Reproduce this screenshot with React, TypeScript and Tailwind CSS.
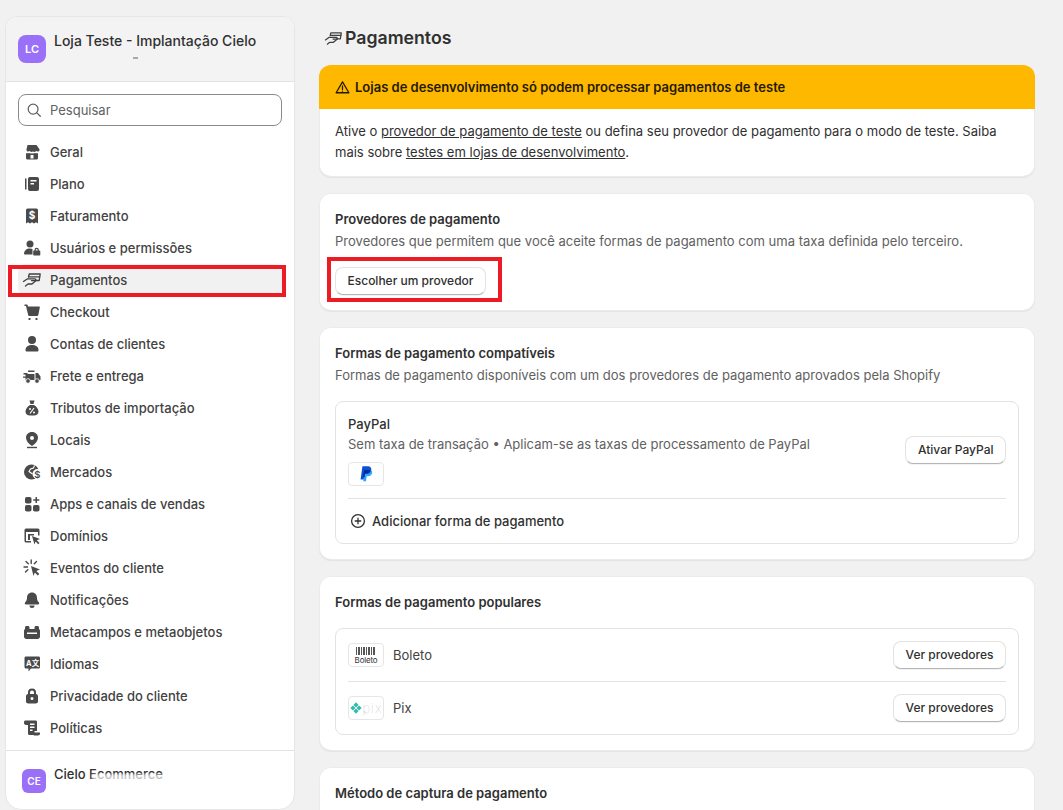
import React from "react";

const I = ({ children }: { children: React.ReactNode }) => (
  <svg viewBox="0 0 20 20" className="w-5 h-5 shrink-0" fill="#4a4a4a">{children}</svg>
);

const PayIcon = ({ className = "w-5 h-5" }: { className?: string }) => (
  <svg viewBox="0 0 20 20" className={`${className} shrink-0`} fill="none" stroke="#3f3f3f" strokeWidth="1.300" strokeLinejoin="round" strokeLinecap="round">
    <path d="M6.500 7 7.200 4h11l-1 6.500h-3" />
    <path d="M7 6.800h10.700" />
    <path d="M1.500 11.500 5.500 8.800h7.500c1.100 0 1.100 1.800 0 1.800H9.500" />
    <path d="M14 10.500 10 14H6L3.500 16" />
  </svg>
);

const icons: Record<string, React.ReactNode> = {
  Geral: <I><path d="M5.500 3h9l3 4.200c.4 1.800-1.600 3-3 1.900-1 1-2.600 1-3.500.3-1 .7-2.500.7-3.500-.3-1.400 1.100-3.400-.1-3-1.900z" /><path fillRule="evenodd" d="M4 11.200c1 .3 2 .2 3-.2 1 .5 2 .5 3 .2 1 .3 2 .3 3-.2 1 .4 2 .5 3 .2V16a1.500 1.500 0 0 1-1.500 1.500h-9A1.500 1.500 0 0 1 4 16zM8.500 13v3.500h3V13z" /></I>,
  Plano: <I><path d="M3 4.500h1.500v11H3z" /><path fillRule="evenodd" d="M7.500 3H15a2 2 0 0 1 2 2v10a2 2 0 0 1-2 2H7.500a2 2 0 0 1-1.500-2V5a2 2 0 0 1 1.500-2zM8.500 6v1.500h6V6zm0 3v1.500h3.500V9z" /></I>,
  Faturamento: <I><path fillRule="evenodd" d="M5.500 2.500h9A1.500 1.500 0 0 1 16 4v13.500l-2-1.300-2 1.300-2-1.300-2 1.300-2-1.300-2 1.300V4a1.500 1.500 0 0 1 1.500-1.500z" /><text x="10" y="12.500" fontSize="10" fontWeight="700" textAnchor="middle" fill="#fff" fontFamily="Inter, sans-serif">$</text></I>,
  "Usuários e permissões": <I><circle cx="8" cy="6" r="3.500" /><path d="M2 16c0-3.500 2.500-5.500 6-5.500 1 0 1.800.2 2.500.5v5.500H3c-.6 0-1-.4-1-.5z" /><path fillRule="evenodd" d="M12 12.500h.5V12a2.200 2.200 0 0 1 4.400 0v.5h.6c.5 0 .8.400.8.800v3.400c0 .500-.300.800-.800.800H12c-.500 0-.800-.300-.800-.800v-3.400c0-.400.300-.800.800-.800zm1.800-.5v.5h1.800V12a.900.900 0 0 0-1.800 0z" /></I>,
  Checkout: <I><path d="M2.500 2.500h2.200c.5 0 .9.300 1 .8l.3 1.200h11c.6 0 1 .500.800 1.100l-1.500 7.500c-.1.500-.500.900-1 .900H7.200c-.5 0-.9-.300-1-.800L4 4H2.500z" /><rect x="6.500" y="16" width="2" height="2" rx=".6" /><rect x="13.500" y="16" width="2" height="2" rx=".6" /></I>,
  "Contas de clientes": <I><circle cx="10" cy="6" r="4" /><path d="M3.500 16c0-3.200 2.900-5 6.500-5s6.500 1.800 6.500 5c0 1-.6 1.500-1.500 1.500H5c-.9 0-1.500-.500-1.500-1.500z" /></I>,
  "Frete e entrega": <I><path d="M6 4.500h6.500V6H6zM3.500 8h9v6h-9zM13.500 7H16l2.500 3.500V14h-5z" /><path d="M1.500 7h4v1.400h-4zM1 10.500h5v1.300H1z" /><circle cx="6" cy="15" r="2.300" stroke="#fff" strokeWidth=".8" /><circle cx="15" cy="15" r="2.300" stroke="#fff" strokeWidth=".8" /></I>,
  "Tributos de importação": <I><path fillRule="evenodd" d="M7.500 2.500h5l-1 3.500H8.500zM8 7h4c2.500 1.500 4.500 4 4.500 6.500 0 2.500-2 4-4.500 4H8c-2.500 0-4.500-1.500-4.500-4C3.500 11 5.500 8.500 8 7z" /><path d="m12 10-4 5.500" stroke="#fff" strokeWidth="1.200" /><circle cx="8" cy="11" r="1" fill="#fff" /><circle cx="12" cy="14.500" r="1" fill="#fff" /></I>,
  Locais: <I><path fillRule="evenodd" d="M10 2c3.600 0 6 2.600 6 5.800 0 3-2.600 6-6 8.200-3.400-2.200-6-5.200-6-8.200C4 4.600 6.400 2 10 2zm0 4a2 2 0 1 0 0 4 2 2 0 0 0 0-4z" /><path d="M5 16.800h10v1.400H5z" /></I>,
  Mercados: <I><circle cx="9.500" cy="10" r="7.500" /><path d="M12.500 3.500 11.500 6l-3 1-1.500 2.500 3.500 2.500" stroke="#fff" strokeWidth="1.100" fill="none" /><circle cx="15.500" cy="12" r="5" fill="#fff" /><text x="15.400" y="15.500" fontSize="9.500" fontWeight="600" textAnchor="middle" fontFamily="Inter, sans-serif">$</text></I>,
  "Apps e canais de vendas": <I><rect x="3" y="3" width="6.500" height="6.500" rx="1.800" /><rect x="3" y="11" width="6.500" height="6.500" rx="1.800" /><rect x="11" y="11" width="6.500" height="6.500" rx="1.800" /><path d="M13.500 3h1.500v2.300h2.300v1.500H15v2.300h-1.500V6.800h-2.300V5.300h2.300z" /></I>,
  Domínios: <I><path fillRule="evenodd" d="M4 2.500h12A1.500 1.500 0 0 1 17.500 4v5.500H16V6H4v9h5v1.500H4A1.500 1.500 0 0 1 2.500 15V4A1.500 1.500 0 0 1 4 2.500z" /><path d="M6 8h6v1.500H8V14H6z" /><path d="m10 10 8 3-3.200 1.200L17.500 17l-1.300 1.200-2.600-2.700L12.500 18.500z" /></I>,
  "Eventos do cliente": <I><path d="m9 8 9 3.500-3.700 1.500 3 3-1.500 1.500-3-3L11.500 18z" /><path d="M9.200 2v3.500M4 3.500l2.300 2.300M2 9h3.500M3.500 14l2.300-2.300M14.500 3.500 12.300 5.800" stroke="#4a4a4a" strokeWidth="1.400" strokeLinecap="round" fill="none" /></I>,
  Notificações: <I><path d="M10 2.500c3.200 0 5 2.500 5 5.200 0 2.300.8 3.500 1.800 4.500.8.800.4 2.300-.8 2.300H4c-1.200 0-1.600-1.500-.8-2.300C4.200 11.200 5 10 5 7.700 5 5 6.800 2.500 10 2.500z" /><path d="M7.500 15.500h5a2.500 2.500 0 0 1-5 0z" /></I>,
  "Metacampos e metaobjetos": <I><path fillRule="evenodd" d="M4.500 4h1.500c.8 0 1.500.700 1.500 1.500V7h5V5.500c0-.800.700-1.500 1.500-1.500h1.500C16.400 4 17 4.600 17 5.500V7c.6.500 1 1 1 2v5.500c0 1.400-1 2.500-2.500 2.500h-11C3 17 2 15.900 2 14.500V9c0-1 .4-1.500 1-2V5.500C3 4.600 3.600 4 4.500 4zM5 10.500V12h10v-1.500z" /></I>,
  Idiomas: <I><path d="M4 2.500h12.500c1 0 1.500.700 1.500 1.500v9c0 1-.7 1.500-1.500 1.500H9L6.500 17.500v-3H4c-1 0-1.500-.700-1.500-1.500V4c0-1 .7-1.500 1.500-1.500z" /><text x="6.800" y="11.500" fontSize="7.500" fontWeight="700" textAnchor="middle" fill="#fff" fontFamily="Inter, sans-serif">A</text><text x="13.500" y="11.500" fontSize="7.500" fontWeight="700" textAnchor="middle" fill="#fff" fontFamily="Noto Sans CJK SC, sans-serif">文</text></I>,
  "Privacidade do cliente": <I><path fillRule="evenodd" d="M6 8V6.500a4 4 0 0 1 8 0V8c1.200.2 2 1 2 2.200v5.300c0 1.200-1 2-2.200 2H6.200c-1.200 0-2.200-.800-2.200-2v-5.300C4 9 4.800 8.200 6 8zm2-.100h4V6.500a2 2 0 0 0-4 0zM10 11a1.500 1.500 0 1 0 0 3 1.500 1.500 0 0 0 0-3z" /></I>,
  Políticas: <I><path fillRule="evenodd" d="M3.500 2.500h10c1 0 1.500.7 1.500 1.500v9h-2.500v2.500c0 1-.700 1.500-1.500 1.500H7.500c-1 0-1.500-.700-1.500-1.500V7H4c-1 0-2-.700-2-2V4c0-.800.700-1.500 1.500-1.500zM8 5.500V7h4.500V5.500zM8 8.500V10h4.500V8.500zM8 11.500V13h2.500v-1.500z" /><path d="M12 14.500h6v1c0 1-.700 2-2 2H11.500c.5-.500.500-1.500.500-3z" /></I>,
};

const nav = ["Geral", "Plano", "Faturamento", "Usuários e permissões", "Pagamentos", "Checkout", "Contas de clientes", "Frete e entrega", "Tributos de importação", "Locais", "Mercados", "Apps e canais de vendas", "Domínios", "Eventos do cliente", "Notificações", "Metacampos e metaobjetos", "Idiomas", "Privacidade do cliente", "Políticas"];

const Btn = ({ children }: { children: React.ReactNode }) => (
  <button className="h-7 px-[11.500px] rounded-lg bg-white text-[12px] font-medium leading-none text-[#303030] border border-[#e3e3e3] border-b-[#b5b5b5] whitespace-nowrap shadow-[0_1px_0_rgba(0,0,0,0.05)]">
    {children}
  </button>
);

const Card = ({ children, className = "" }: { children: React.ReactNode; className?: string }) => (
  <section className={`bg-white rounded-xl shadow-[inset_0_0_0_1px_#ebebeb,inset_0_-1px_0_#d4d4d4,0_1px_1px_rgba(0,0,0,0.06)] ${className}`}>
    {children}
  </section>
);

const Logo = ({ children }: { children: React.ReactNode }) => (
  <div className="w-9 h-6 rounded border border-[#e6e6e6] bg-white flex items-center justify-center overflow-hidden shrink-0">{children}</div>
);

export default function App() {
  return (
    <div className="relative h-[810px] overflow-hidden bg-[#f1f1f1] flex items-start text-[#303030] text-[13px] leading-5" style={{ fontFamily: "Inter, 'Liberation Sans', sans-serif" }}>
      <aside className="relative ml-[5px] mt-4 w-[290px] h-[794px] shrink-0 bg-white rounded-xl rounded-b-2xl border border-[#e6e6e6] overflow-hidden flex flex-col">
        <div className="relative h-[65px] bg-[#f3f3f3] border-b border-[#e3e3e3] flex px-3 shrink-0 items-start pt-[18px] gap-2">
          <div className="w-7 h-7 rounded-lg bg-[#9a70f9] text-white text-[11px] font-semibold flex items-center justify-center">LC</div>
          <div className="text-[14px] font-medium -mt-[4px] text-[#303030]">Loja Teste - Implantação Cielo</div>
          <div className="absolute left-[127px] top-[40px] w-[5px] h-[2px] bg-[#a8a8a8] blur-[0.5px]" />
        </div>
        <div className="px-3 pt-3 pb-[10px] shrink-0">
          <div className="h-8 rounded-lg border border-[#8a8a8a] flex items-center pl-[6px] gap-[7px] text-[#616161]">
            <svg viewBox="0 0 20 20" className="w-[18px] h-[18px]" fill="none" stroke="#616161" strokeWidth="1.400" strokeLinecap="round"><circle cx="9" cy="9" r="5.500" /><path d="m13.200 13.200 3.800 3.800" /></svg>
            <span>Pesquisar</span>
          </div>
        </div>
        <nav className="px-3 flex flex-col">
          {nav.map((n) => (
            <div key={n} className={`h-8 flex items-center gap-[6px] pl-[4px] rounded-lg font-medium text-[#424242] ${n === "Pagamentos" ? "bg-[#f1f1f1]" : ""}`}>
              {n === "Pagamentos" ? <PayIcon /> : icons[n]}
              <span className="ml-0.5">{n}</span>
            </div>
          ))}
        </nav>
        <div className="border-t border-[#e3e3e3] mt-[6px] pl-4 pt-[18px] flex gap-2 items-start">
          <div className="w-6 h-6 rounded-md bg-[#9a70f9] text-white text-[10px] font-semibold flex items-center justify-center">CE</div>
          <div className="relative text-[13px] font-medium -mt-[5px] text-[#303030]">
            Cielo Ecommerce
            <div className="absolute left-[38px] right-0 top-[10px] h-[14px] bg-white/70 blur-[1px]" />
          </div>
        </div>
      </aside>

      <main className="ml-6 w-[716px] shrink-0 flex flex-col gap-4 pt-[23px]">
        <h1 className="flex items-center h-[30px] -mb-1 pl-[5px] gap-[2px] text-[17.700px] font-semibold text-[#303030]">
          <PayIcon className="w-[19px] h-[19px]" />
          <span>Pagamentos</span>
        </h1>
        <Card className="overflow-hidden">
          <div className="h-[44px] bg-[#ffb800] flex items-center pl-4 gap-[5px] font-semibold text-[#251a00]">
            <svg viewBox="0 0 20 20" className="w-[15px] h-[15px]" fill="none" stroke="#251a00" strokeWidth="1.700" strokeLinejoin="round" strokeLinecap="round"><path d="M10 2.500 18.500 17h-17z" /><path d="M10 8v4.500M10 14.800v.1" /></svg>
            Lojas de desenvolvimento só podem processar pagamentos de teste
          </div>
          <div className="px-4 pt-3 h-[68px] leading-[21px] text-[13.030px]">
            Ative o <span className="underline">provedor de pagamento de teste</span> ou defina seu provedor de pagamento para o modo de teste. Saiba mais sobre <span className="underline">testes em lojas de desenvolvimento</span>.
          </div>
        </Card>
        <Card className="h-[118px] px-4 pt-4">
          <h2 className="font-semibold">Provedores de pagamento</h2>
          <p className="text-[#616161] mt-0.5 text-[13.040px]">Provedores que permitem que você aceite formas de pagamento com uma taxa definida pelo terceiro.</p>
          <div className="mt-4"><Btn>Escolher um provedor</Btn></div>
        </Card>
        <Card className="h-[233px] px-4 pt-4">
          <h2 className="font-semibold">Formas de pagamento compatíveis</h2>
          <p className="text-[#616161] mt-0.5 text-[13.040px]">Formas de pagamento disponíveis com um dos provedores de pagamento aprovados pela Shopify</p>
          <div className="mt-4 border border-[#e3e3e3] rounded-lg px-3 h-[143px]">
            <div className="flex items-center justify-between h-[97px] border-b border-[#e3e3e3]">
              <div className="self-start pt-3">
                <div className="font-medium">PayPal</div>
                <div className="text-[#616161]">Sem taxa de transação • Aplicam-se as taxas de processamento de PayPal</div>
                <div className="mt-2">
                  <Logo>
                    <svg viewBox="0 0 20 20" className="w-[18px] h-[18px]"><path d="M6 1.500h6c3 0 4.500 2 3.800 4.500-.7 2.600-3 3.800-5.300 3.800H9L8 16H4z" fill="#0d4fd6" /><path d="M7.500 5.500h6c2.600 0 4 1.400 3.300 3.700-.6 2.100-2.400 3.300-4.500 3.300h-1.500l-.8 5.500H7z" fill="#2ea8ff" /><path d="M7.500 5.500h5.300c.9 0 1.800.100 2.700.500-.7 2.400-2.700 3.800-5 3.800H9L8.300 14H6.500z" fill="#002b9e" /></svg>
                  </Logo>
                </div>
              </div>
              <Btn>Ativar PayPal</Btn>
            </div>
            <div className="flex items-center h-[44px] pl-[2px] gap-[6px] font-medium">
              <svg viewBox="0 0 20 20" className="w-4 h-4" fill="none" stroke="#303030" strokeWidth="1.600" strokeLinecap="round"><circle cx="10" cy="10" r="8" /><path d="M10 6.500v7M6.500 10h7" /></svg>
              Adicionar forma de pagamento
            </div>
          </div>
        </Card>
        <Card className="h-[175px] px-4 pt-4">
          <h2 className="font-semibold">Formas de pagamento populares</h2>
          <div className="mt-4 border border-[#e3e3e3] rounded-lg px-3 h-[107px]">
            <div className="flex items-center h-[53px] border-b border-[#e3e3e3] gap-[9px]">
              <Logo>
                <div className="flex flex-col items-center leading-none">
                  <div className="w-[20px] h-[8px] bg-[repeating-linear-gradient(90deg,#555_0_1px,#fff_1px_2px,#555_2px_4px,#fff_4px_5px)]" />
                  <span className="text-[8px] text-[#333] tracking-tight mt-px">Boleto</span>
                </div>
              </Logo>
              <span className="flex-1 text-[#424242]">Boleto</span>
              <Btn>Ver provedores</Btn>
            </div>
            <div className="flex items-center h-[52px] gap-[9px]">
              <Logo>
                <div className="flex items-center gap-[1px]">
                  <svg viewBox="0 0 12 12" className="w-[12px] h-[12px] shrink-0" fill="#32bcad"><path d="M6 .3 8.600 2.900 6 5.500 3.400 2.900z" /><path d="M6 11.700 8.600 9.100 6 6.500 3.400 9.100z" /><path d="M.3 6 2.900 3.400 5.500 6 2.900 8.600z" /><path d="M11.700 6 9.100 3.400 6.500 6 9.100 8.600z" /></svg>
                  <span className="text-[13px] text-[#bdbdbd] font-thin leading-none tracking-[1px]">pix</span>
                </div>
              </Logo>
              <span className="flex-1 text-[#424242]">Pix</span>
              <Btn>Ver provedores</Btn>
            </div>
          </div>
        </Card>
        <Card className="h-[100px] px-4 pt-4">
          <h2 className="font-semibold">Método de captura de pagamento</h2>
        </Card>
      </main>

      <div className="absolute left-2 top-[265px] w-[278px] h-[32px] border-[4px] border-[#ed1c24] pointer-events-none" />
      <div className="absolute left-[327px] top-[257px] w-[175px] h-[45px] border-[4px] border-[#ed1c24] pointer-events-none" />
    </div>
  );
}
